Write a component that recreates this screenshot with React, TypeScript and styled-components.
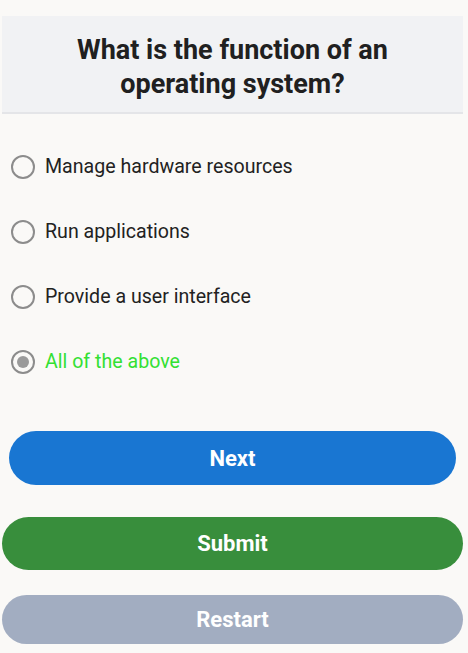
import React, { useState } from "react";
import styled, { createGlobalStyle } from "styled-components";

const GlobalStyle = createGlobalStyle`
  html, body { margin: 0; padding: 0; background: #faf9f7; }
  body { font-family: Roboto, "Noto Sans", Arial, sans-serif; }
`;

const Page = styled.div`
  width: 468px;
  min-height: 653px;
  box-sizing: border-box;
  padding: 16px 5px 0 2px;
  background: #faf9f7;
  display: flex;
  flex-direction: column;
`;

const Header = styled.div`
  height: 98px;
  box-sizing: border-box;
  background: #f1f2f4;
  border-bottom: 2px solid #e4e5e8;
  display: flex;
  align-items: center;
  justify-content: center;
  text-align: center;
  padding: 6px 50px 0;
`;

const Question = styled.h1`
  margin: 0;
  font-size: 27px;
  line-height: 34px;
  font-weight: 700;
  color: #202020;
`;

const Options = styled.div`
  display: flex;
  flex-direction: column;
  padding-top: 20px;
`;

const OptionRow = styled.label`
  height: 65px;
  display: flex;
  align-items: center;
  gap: 10px;
  padding-left: 9px;
  cursor: pointer;
`;

const Radio = styled.span<{ $checked: boolean }>`
  width: 24px;
  height: 24px;
  box-sizing: border-box;
  border-radius: 50%;
  border: 2px solid #8c8c8c;
  display: flex;
  align-items: center;
  justify-content: center;
  &::after {
    content: "";
    width: 12px;
    height: 12px;
    border-radius: 50%;
    background: ${(p) => (p.$checked ? "#9a9a9a" : "transparent")};
  }
`;

const OptionText = styled.span<{ $checked: boolean }>`
  font-size: 19.6px;
  color: ${(p) => (p.$checked ? "#33e033" : "#222222")};
`;

const Buttons = styled.div`
  display: flex;
  flex-direction: column;
  margin-top: 37px;
`;

const Button = styled.button<{ $bg: string; $h: number; $inset: number; $mt: number }>`
  height: ${(p) => p.$h}px;
  margin: ${(p) => p.$mt}px ${(p) => p.$inset}px 0;
  border: none;
  border-radius: 999px;
  background: ${(p) => p.$bg};
  color: #ffffff;
  font-family: Roboto, "Noto Sans", Arial, sans-serif;
  font-size: 22px;
  font-weight: 700;
  cursor: pointer;
`;

const options = [
  "Manage hardware resources",
  "Run applications",
  "Provide a user interface",
  "All of the above",
];

export default function App() {
  const [selected, setSelected] = useState(3);
  return (
    <>
      <GlobalStyle />
      <Page>
        <Header>
          <Question>What is the function of an operating system?</Question>
        </Header>
        <Options>
          {options.map((o, i) => (
            <OptionRow key={o} onClick={() => setSelected(i)}>
              <Radio $checked={selected === i} />
              <OptionText $checked={selected === i}>{o}</OptionText>
            </OptionRow>
          ))}
        </Options>
        <Buttons>
          <Button $bg="#1976d2" $h={54} $inset={7} $mt={0}>Next</Button>
          <Button $bg="#388e3c" $h={53} $inset={0} $mt={32}>Submit</Button>
          <Button $bg="#a2adc1" $h={49} $inset={0} $mt={25}>Restart</Button>
        </Buttons>
      </Page>
    </>
  );
}
